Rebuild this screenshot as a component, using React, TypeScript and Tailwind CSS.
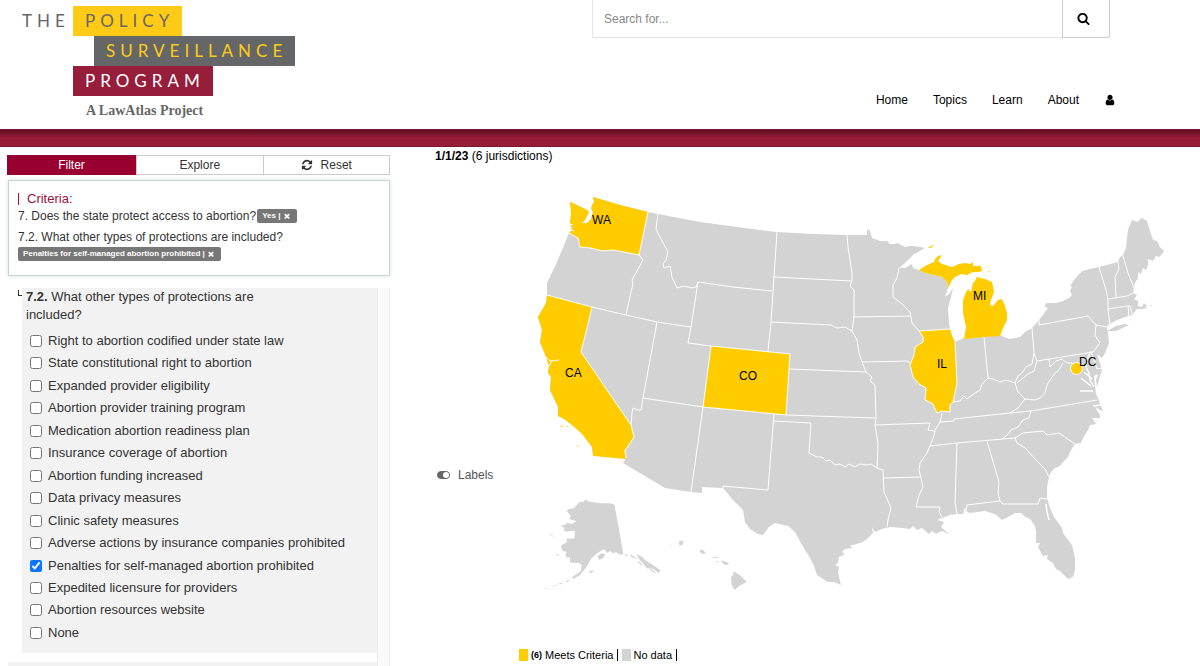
import { useState } from "react";

const ICONS = {
  search:
    "M1216 832q0-185-131.5-316.5t-316.5-131.5-316.5 131.5-131.5 316.5 131.5 316.5 316.5 131.5 316.5-131.5 131.5-316.5zm512 832q0 52-38 90t-90 38q-54 0-90-38l-343-342q-179 124-399 124-143 0-273.5-55.5t-225-150-150-225-55.5-273.5 55.5-273.5 150-225 225-150 273.5-55.5 273.5 55.5 225 150 150 225 55.5 273.5q0 220-124 399l343 343q37 37 37 90z",
  user: "M1536 1399q0 109-62.5 187t-150.5 78h-854q-88 0-150.5-78t-62.5-187q0-85 8.5-160.5t31.5-152 58.5-131 94-89 134.5-34.5q131 128 313 128t313-128q76 0 134.5 34.5t94 89 58.5 131 31.5 152 8.5 160.5zm-256-887q0 159-112.5 271.5t-271.5 112.5-271.5-112.5-112.5-271.5 112.5-271.5 271.5-112.5 271.5 112.5 112.5 271.5z",
  refresh:
    "M1639 1056q0 5-1 7-64 268-268 434.5t-478 166.5q-146 0-282.5-55t-243.5-157l-129 129q-19 19-45 19t-45-19-19-45v-448q0-26 19-45t45-19h448q26 0 45 19t19 45-19 45l-137 137q71 66 161 102t187 36q134 0 250-65t186-179q11-17 53-117 8-23 30-23h192q13 0 22.5 9.5t9.5 22.5zm25-800v448q0 26-19 45t-45 19h-448q-26 0-45-19t-19-45 19-45l138-138q-148-137-349-137-134 0-250 65t-186 179q-11 17-53 117-8 23-30 23h-199q-13 0-22.5-9.5t-9.5-22.5v-7q65-268 270-434.5t480-166.5q146 0 284 55.5t245 156.5l130-129q19-19 45-19t45 19 19 45z",
  times:
    "M1490 1322q0 40-28 68l-136 136q-28 28-68 28t-68-28l-294-294-294 294q-28 28-68 28t-68-28l-136-136q-28-28-28-68t28-68l294-294-294-294q-28-28-28-68t28-68l136-136q28-28 68-28t68 28l294 294 294-294q28-28 68-28t68 28l136 136q28 28 28 68t-28 68l-294 294 294 294q28 28 28 68z",
};

function Icon({ name, className }: { name: keyof typeof ICONS; className: string }) {
  return (
    <svg viewBox="0 0 1792 1792" fill="currentColor" aria-hidden="true" className={className}>
      <path d={ICONS[name]} />
    </svg>
  );
}

const OPTIONS = [
  "Right to abortion codified under state law",
  "State constitutional right to abortion",
  "Expanded provider eligibility",
  "Abortion provider training program",
  "Medication abortion readiness plan",
  "Insurance coverage of abortion",
  "Abortion funding increased",
  "Data privacy measures",
  "Clinic safety measures",
  "Adverse actions by insurance companies prohibited",
  "Penalties for self-managed abortion prohibited",
  "Expedited licensure for providers",
  "Abortion resources website",
  "None",
];

function Logo() {
  return (
    <a href="#" className="block font-['Lato',sans-serif] text-[17px] leading-[30px] tracking-[5px]">
      <span className="flex text-[#666]">
        <span className="w-[51px]">THE</span>
        <span className="bg-[#ffcb16] pr-2 pl-3">POLICY</span>
      </span>
      <span className="flex">
        <span className="ml-[72px] bg-[#646667] pr-2 pl-3 text-[#ffcb16]">SURVEILLANCE</span>
      </span>
      <span className="flex">
        <span className="ml-[51px] bg-[#961e3a] pr-2 pl-3 text-white">PROGRAM</span>
      </span>
      <span className="block pl-16 font-['Liberation_Serif',serif] text-sm leading-[30px] font-bold tracking-normal text-[#666]">
        A LawAtlas Project
      </span>
    </a>
  );
}

function Header() {
  return (
    <header className="flex h-[129px] shrink-0 justify-between pt-[6px] pr-[90px] pl-[22px]">
      <Logo />
      <div className="-mt-[6px] flex w-[518px] flex-col">
        <form className="flex h-[38px]" onSubmit={(e) => e.preventDefault()}>
          <input
            type="text"
            aria-label="Search"
            placeholder="Search for..."
            className="min-w-0 flex-1 border border-t-0 border-r-0 border-[#e6e6e6] px-[11px] text-xs outline-none placeholder:text-[#888]"
          />
          <button
            type="submit"
            aria-label="Submit search"
            className="flex w-12 items-center justify-center rounded-br-[3px] border border-t-0 border-[#ccc] pr-[6px]"
          >
            <Icon name="search" className="size-[13px]" />
          </button>
        </form>
        <nav className="-mr-[6px] mt-[53px] flex items-center justify-end gap-[25px] text-xs leading-[18px] text-black">
          <a href="#">Home</a>
          <a href="#">Topics</a>
          <a href="#">Learn</a>
          <a href="#">About</a>
          <a href="#" aria-label="Account">
            <Icon name="user" className="size-3" />
          </a>
        </nav>
      </div>
    </header>
  );
}

function Tag({ children }: { children: string }) {
  return (
    <span className="inline-flex h-[14px] items-center rounded-[2px] bg-[#777] pr-[6px] pl-[5px] text-[8px] leading-[14px] font-bold text-white">
      {children}&nbsp;|&nbsp;
      <button type="button" aria-label={`Remove ${children}`}>
        <Icon name="times" className="size-2" />
      </button>
    </span>
  );
}

function FilterPanel() {
  const [checked, setChecked] = useState<string[]>([OPTIONS[10]]);
  const toggle = (o: string) =>
    setChecked((c) => (c.includes(o) ? c.filter((x) => x !== o) : [...c, o]));
  return (
    <aside className="flex min-h-0 w-[383px] shrink-0 flex-col text-[13px] text-[#333]">
      <div className="mt-2 flex h-5 text-xs">
        <button type="button" className="w-[129px] bg-[#970031] text-white">
          Filter
        </button>
        <button type="button" className="flex-1 border border-[#ccc]">
          Explore
        </button>
        <button
          type="button"
          className="flex flex-1 items-center justify-center gap-2 border border-l-0 border-[#ccc]"
        >
          <Icon name="refresh" className="size-3" />
          Reset
        </button>
      </div>
      <section className="mt-[5px] ml-px border border-[#c9d3d3] px-[9px] pt-[9px] pb-[14px] shadow-[0_0_4px_#d5dfdd]">
        <h2 className="flex items-center gap-2 leading-[17px] text-[#a01034]">
          <span className="h-3 w-px bg-[#a01034]" />
          Criteria:
        </h2>
        <p className="flex items-center gap-px text-xs leading-[18px]">
          7. Does the state protect access to abortion? <Tag>Yes</Tag>
        </p>
        <p className="mt-[3px] text-xs leading-[18px]">7.2. What other types of protections are included?</p>
        <p className="flex h-[15px] items-center">
          <Tag>Penalties for self-managed abortion prohibited</Tag>
        </p>
      </section>
      <section className="mt-3 ml-px flex min-h-0 flex-1 overflow-hidden border-r border-[#eee]">
        <div className="flex flex-1 flex-col">
          <div className="flex">
            <span className="mt-[2px] ml-[10px] h-[6px] w-1 border-b border-l border-[#333]" />
            <div
              role="group"
              aria-labelledby="question-7-2"
              className="min-w-0 flex-1 bg-[#f2f2f2] pb-[11px] pl-1"
            >
              <h3 id="question-7-2" className="w-[250px] pb-2 leading-[18px]">
                <b>7.2.</b> What other types of protections are included?
              </h3>
              <div className="flex h-[310px] flex-col justify-between pl-1">
                {OPTIONS.map((o) => (
                  <label key={o} className="flex items-center gap-[6px] leading-[18px]">
                    <input
                      type="checkbox"
                      checked={checked.includes(o)}
                      onChange={() => toggle(o)}
                      className="size-3 accent-[#0b75ff]"
                    />
                    {o}
                  </label>
                ))}
              </div>
            </div>
          </div>
          <div className="mt-[9px] flex-1 bg-[#f2f2f2]" />
        </div>
        <div className="w-3 border-l border-[#ececec] bg-[#fafafa]" />
      </section>
    </aside>
  );
}

const MAINLAND =
  "M570 202L575 204 581 207 587 210 589 212 587 216 585 220 582 223 587 223 591 219 593 212 591 209 592 205 594 202 593 197 620 205 648 212 658 214 700 222 737 227 777 232 813 234 847 235 867 235 867 229 870 231 872 238 880 241 887 241 890 244 894 244 898 243 901 245 905 247 909 246 914 246 920 247 925 248 918 252 913 255 906 262 899 268 905 268 912 264 913 268 919 270 925 273 942 277 947 282 948 288 946 294 945 297 949 294 953 288 951 297 948 308 949 323 950 329 952 336 955 342 964 338 984 337 1000 335 1004 337 1010 339 1020 337 1025 332 1032 328 1039 320 1048 308 1044 306 1047 303 1056 303 1063 301 1069 298 1072 295 1070 291 1072 286 1070 286 1074 280 1082 271 1090 269 1099 267 1118 262 1120 257 1123 255 1126 248 1127 238 1128 230 1132 220 1137 222 1142 218 1147 221 1150 231 1153 240 1157 241 1160 247 1164 251 1162 254 1159 257 1156 256 1153 261 1148 259 1148 265 1146 270 1143 268 1141 274 1138 272 1138 278 1135 283 1134 288 1133 293 1137 295 1134 299 1138 301 1138 306 1142 307 1144 303 1147 306 1143 309 1137 309 1132 315 1125 317 1115 321 1108 325 1107 329 1108 333 1109 343 1105 353 1102 358 1097 354 1100 363 1102 370 1100 376 1097 387 1096 380 1098 374 1094 376 1095 386 1096 394 1098 398 1103 411 1100 410 1095 407 1100 415 1100 418 1092 418 1096 424 1090 425 1088 430 1083 438 1081 443 1075 444 1070 452 1068 457 1063 462 1060 466 1055 468 1051 472 1049 477 1047 487 1047 498 1050 508 1054 517 1062 528 1063 533 1072 545 1075 558 1075 570 1073 577 1068 579 1064 575 1060 571 1056 569 1053 563 1047 559 1048 555 1043 556 1038 547 1040 543 1036 543 1036 532 1035 526 1030 519 1025 517 1021 513 1015 513 1010 516 1002 520 995 514 985 511 970 513 966 511 965 507 963 514 957 514 950 515 942 518 937 520 944 522 941 527 949 534 942 531 936 534 932 531 929 534 922 528 917 530 913 526 910 529 903 528 890 527 882 529 875 532 872 527 873 533 867 539 863 542 853 545 850 545 852 548 845 549 842 552 845 554 839 557 838 563 835 565 839 567 838 573 841 585 834 582 828 582 817 575 814 566 810 558 802 545 795 532 788 526 775 523 769 527 763 535 758 534 750 529 745 522 743 510 733 500 723 488 702 487 702 493 691 492 665 488 623 463 626 458 593 455 592 447 582 433 573 425 564 418 558 416 558 407 550 390 551 377 548 373 549 366 546 357 540 342 542 330 538 317 546 303 547 295 547 283 557 262 565 243 569 233 571 230 570 222 572 214Z";

const ISLANDS =
  "M1107 331L1116 326 1125 324 1129 325 1116 331ZM1144 308l3-1-1 2zM1150 305l2 0-1 2z";

// Drawn on a grid three times finer than the mainland's.
const ALASKA =
  "M500 118L503 124 520 127 540 130 565 130 583 133 597 208 610 283 600 284 590 277 578 279 570 274 562 279 553 268 543 272 530 281 514 295 500 320 480 345 460 357 456 352 482 334 485 314 475 308 463 309 450 307 450 290 442 294 436 286 440 275 428 273 423 258 430 252 440 248 440 236 463 235 465 213 450 213 440 215 430 211 434 205 422 195 435 195 442 188 455 192 470 184 448 177 452 168 440 152 447 147 462 145 477 127 490 125ZM533 288L545 280 556 283 550 293 538 300ZM507 332L524 333 510 340ZM408 283l9 0-4 5zM385 220l10 4 8 7-9-4zM447 359l-12 6 10 1zM428 367l-15 5 12 1zM413 373l-22 9 17-5zM383 384l-12 3 10 0zM613 281l10 3 0 5-7-3zM628 283l14 6 8 8-16-6zM652 282l14 8 12 12 20 12 24 17-6 8-16-12-16-4-20-18-12-16zM654 302l12 10 0 5-12-10zM672 310l14 14-2 3-12-11zM690 325l20 15-8-2-14-10zM280 387l10 2M320 388l6-1M200 330l6-3";

const HAWAII =
  "M776 246l9-5 6 4-4 9-8 3zM838 270l10-1 9 9-5 4-9-2zM876 291l18 0 1 3-16-1zM888 304l8-2-3 6zM902 301l10 3 16 5-7 6-9-1zM941 334L962 347 980 366 958 377 944 390 935 375 933 352 939 345ZM748 256l6-2-2 4z";

const BORDERS =
  "M648 212L639 255 643 260 638 269 632 280 633 284 631 292 626 315" +
  "M569 233L578 238 580 247 590 248 603 251 613 250 639 255" +
  "M547 295L592 307 626 315 657 322 691 327" +
  "M658 214L656 229 661 239 668 252 666 260 663 264 664 268 670 266 672 277 677 288 684 286 692 288 696 287 698 282 691 327 688 343 711 346 790 354" +
  "M698 282L733 287 772 291M777 232L771 322 768 351M774 277L852 281M771 322L831 325 837 328 845 327 852 331" +
  "M847 235L848 247 850 260 852 273 852 280 850 286 854 290 854 317 852 331 857 340 859 353 862 362 866 372 872 377 870 381 875 385 876 418 875 425 878 443 877 468" +
  "M789 369L866 372M790 354L786 415 703 407M786 415L875 418M853 317L911 316M862 362L908 361 911 364" +
  "M899 268L897 278 893 285 893 297 901 303 910 312 912 323 919 331 950 329" +
  "M592 307L589 320 581 352 631 425 634 437 629 445 625 450 626 458M657 322L643 398 641 410 638 410 633 408 632 413 631 425" +
  "M643 398L703 407 691 492M711 346L703 407M774 414L768 490 723 486 723 488M774 421L811 423 809 453 817 457 822 457 826 461 830 460 835 465 840 464 845 467 849 464 855 467 860 464 867 465 871 464 877 468 883 470 884 492 891 508 888 520 887 527" +
  "M875 425L930 423 928 430 934 431M883 478L920 477" +
  "M942 413L940 422 935 430 934 436 930 446 927 453 920 463 919 470 923 487 919 495 916 507 940 507 939 512 942 517" +
  "M940 422L954 421 954 419 1010 413 1031 411 1097 400M930 446L957 443 1015 438" +
  "M1031 411L1029 418 1023 420 1018 427 1011 430 1007 435 1002 439M1010 413L1018 408 1025 399" +
  "M957 443L955 503 957 514M987 441L999 482 998 493 1000 501M966 511L967 505 1000 501 1003 504 1038 504 1040 498 1047 499" +
  "M1015 438L1017 443 1025 448 1036 460 1045 469 1049 477M1015 438L1023 433 1043 431 1047 435 1059 433 1075 444" +
  "M919 331L923 337 923 342 915 347 914 355 910 365 913 377 919 384 926 388 925 400 933 404 935 409 937 413 942 411 950 412 950 405 953 402 957 383 955 342" +
  "M953 402L960 401 964 396 967 399 972 395 980 390 982 384 988 378 993 379 1000 382 1006 380 1015 383 1018 376 1022 373 1026 367 1032 364 1034 353" +
  "M1015 383L1018 392 1025 399 1035 400 1040 398 1045 393 1047 385 1050 380 1055 373 1058 371 1063 363M984 337L988 378" +
  "M1032 328L1034 353 1037 361 1093 352M1037 361L1034 371 1028 374 1017 383M1049 359L1050 367 1056 361 1062 359 1067 363 1072 363 1076 369" +
  "M1093 352L1100 343 1095 335 1096 325M1039 325L1088 316 1096 325 1107 327M1039 320L1039 325M1091 351L1097 369 1102 368" +
  "M1099 267L1106 290 1108 300 1108 310 1110 325M1118 262L1119 269 1115 277 1116 297M1108 299L1127 296 1133 293M1108 309L1127 306 1130 306 1132 314M1128 306L1129 317M1123 256L1128 273 1134 288";

const CHESAPEAKE =
  "M1090 353L1087 360 1086 367 1089 373 1090 380 1094 387M1084 372L1092 379M1081 378L1091 386M1080 391L1093 391M1093 406l8-1M1046 504L1047 512 1049 520";

const WASHINGTON =
  "M570 202L575 204 581 207 587 210 589 212 587 216 585 220 582 223 587 223 591 219 593 212 591 209 592 205 594 202 593 197 620 205 648 212 639 255 613 250 603 251 590 248 580 247 578 238 569 233 573 229 570 222 571 214Z";
const CALIFORNIA =
  "M547 295L592 307 581 352 631 425 634 437 629 445 625 450 626 459 593 456 592 447 582 434 573 426 564 419 558 416 558 407 550 390 551 377 548 373 549 366 546 357 540 342 542 330 538 317 546 303ZM560 426l3-1-1 2zM566 426l3 0-2 1zM577 445l2 1-1 1z";
const ILLINOIS =
  "M919 331L950 329 952 336 955 342 957 383 953 402 950 405 950 412 942 411 937 413 935 409 933 404 925 400 926 388 919 384 913 377 910 365 914 355 915 347 923 342 923 337Z";
const MICHIGAN =
  "M919 270L927 265 934 262 935 259 938 256 942 255 938 261 942 264 952 267 959 264 965 263 970 264 973 262 973 266 981 266 982 271 979 272 973 272 967 275 961 274 955 277 952 280 948 288 947 282 942 277 925 273ZM988 271l2 0-1 1zM928 248l6-4-3 4z" +
  "M964 339L966 327 963 313 963 300 966 292 968 289 971 292 973 283 975 281 977 277 985 279 992 282 994 292 991 300 990 305 993 306 998 300 1002 299 1005 306 1007 313 1007 320 1003 328 1000 336 984 337Z";

const LABELS = [
  { text: "WA", x: 592, y: 224 },
  { text: "CA", x: 565, y: 377 },
  { text: "CO", x: 739, y: 380 },
  { text: "IL", x: 937, y: 368 },
  { text: "MI", x: 973, y: 300 },
  { text: "DC", x: 1079, y: 366 },
];

function UsMap({ labels }: { labels: boolean }) {
  return (
    <svg
      viewBox="500 165 700 465"
      role="img"
      aria-label="Map of United States jurisdictions"
      className="block min-w-0 flex-1 self-start font-['Liberation_Sans',Arial,sans-serif]"
    >
      <g fill="#d3d3d3">
        <path d={MAINLAND} />
        <path d={ISLANDS} />
        <g transform="translate(420 460) scale(0.33333)">
          <path d={ALASKA} />
          <path d={HAWAII} />
        </g>
      </g>
      <g fill="#ffcc00">
        <path d={WASHINGTON} />
        <path d={CALIFORNIA} />
        <path d="M711 346L790 354 786 415 703 407Z" />
        <path d={ILLINOIS} />
        <path d={MICHIGAN} />
      </g>
      <path d="M570 224l3 1M571 230l3 1M546 357l4 4 9-1M549 366l3-5" fill="none" stroke="#fff" />
      <path d={BORDERS} fill="none" stroke="#fff" strokeLinejoin="round" />
      <path d={CHESAPEAKE} fill="none" stroke="#fff" strokeWidth="1.5" strokeLinejoin="round" />
      <circle cx="1076.500" cy="368.500" r="6" fill="#ffcc00" stroke="#fff" />
      {labels && (
        <g fontSize="12" fill="#000">
          {LABELS.map((l) => (
            <text key={l.text} x={l.x} y={l.y}>
              {l.text}
            </text>
          ))}
        </g>
      )}
    </svg>
  );
}

function MapPanel() {
  const [labels, setLabels] = useState(true);
  return (
    <section className="flex min-w-0 flex-1 flex-col pl-[45px] text-xs text-black">
      <h1 className="leading-[18px]">
        <b>1/1/23</b> (6 jurisdictions)
      </h1>
      <div className="flex items-end">
        <button
          type="button"
          aria-pressed={labels}
          onClick={() => setLabels(!labels)}
          className="mb-[146px] flex w-[65px] shrink-0 items-center gap-2 pl-[2px] leading-[18px] text-[#555]"
        >
          <svg viewBox="0 0 13 8" aria-hidden="true" className="h-2 w-[13px] shrink-0">
            <rect x="0.500" y="0.500" width="12" height="7" rx="3.500" fill="#666" stroke="#666" />
            <circle cx="9" cy="4" r="3" fill="#fff" />
          </svg>
          Labels
        </button>
        <UsMap labels={labels} />
      </div>
      <div className="mt-4 ml-[84px] flex items-center text-[11px] leading-[18px]">
        <span className="mr-[3px] h-3 w-[9px] bg-[#fc0]" />
        <b className="mr-[3px] text-[9px]">(6)</b>
        Meets Criteria
        <span className="mx-1 h-3 w-px bg-black" />
        <span className="mr-[2px] h-3 w-[9px] bg-[#d3d3d3]" />
        No data
        <span className="mx-1 h-3 w-px bg-black" />
      </div>
    </section>
  );
}

export default function App() {
  return (
    <div className="flex h-screen flex-col bg-white font-['Liberation_Sans',Arial,sans-serif]">
      <Header />
      <div className="h-[18px] shrink-0 border-y border-[#7a1830] bg-linear-to-b from-[#5e0e20] via-[#961c38] via-45% to-[#961c38]" />
      <main className="flex min-h-0 flex-1 pl-[7px]">
        <FilterPanel />
        <MapPanel />
      </main>
    </div>
  );
}
